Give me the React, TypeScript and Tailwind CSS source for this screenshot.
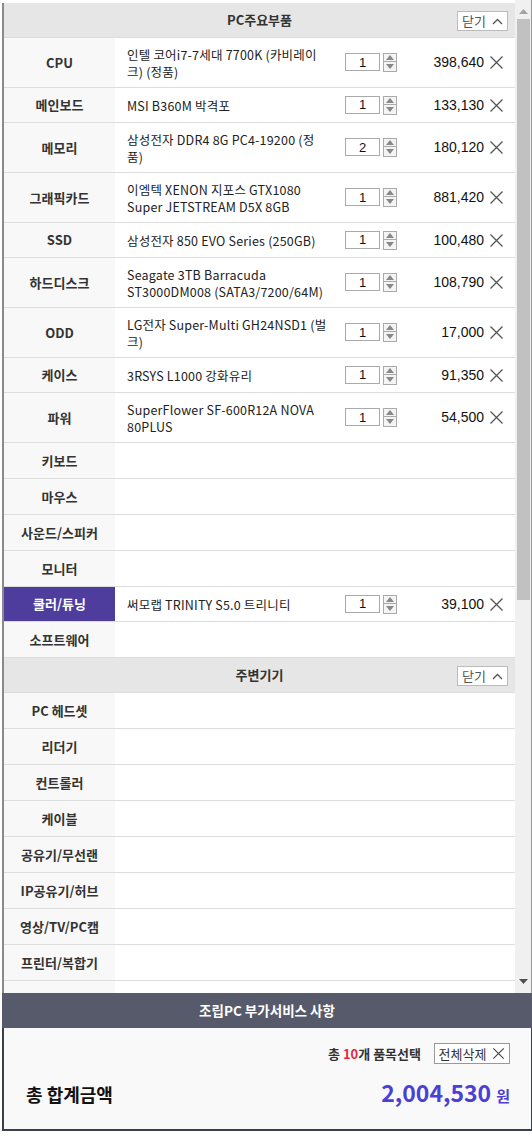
import React from "react";

type Row = { label: string; name?: string[]; qty?: number; price?: string; active?: boolean };

const main: Row[] = [
  { label: "CPU", name: ["인텔 코어i7-7세대 7700K (카비레이", "크) (정품)"], qty: 1, price: "398,640" },
  { label: "메인보드", name: ["MSI B360M 박격포"], qty: 1, price: "133,130" },
  { label: "메모리", name: ["삼성전자 DDR4 8G PC4-19200 (정", "품)"], qty: 2, price: "180,120" },
  { label: "그래픽카드", name: ["이엠텍 XENON 지포스 GTX1080", "Super JETSTREAM D5X 8GB"], qty: 1, price: "881,420" },
  { label: "SSD", name: ["삼성전자 850 EVO Series (250GB)"], qty: 1, price: "100,480" },
  { label: "하드디스크", name: ["Seagate 3TB Barracuda", "ST3000DM008 (SATA3/7200/64M)"], qty: 1, price: "108,790" },
  { label: "ODD", name: ["LG전자 Super-Multi GH24NSD1 (벌", "크)"], qty: 1, price: "17,000" },
  { label: "케이스", name: ["3RSYS L1000 강화유리"], qty: 1, price: "91,350" },
  { label: "파워", name: ["SuperFlower SF-600R12A NOVA", "80PLUS"], qty: 1, price: "54,500" },
  { label: "키보드" },
  { label: "마우스" },
  { label: "사운드/스피커" },
  { label: "모니터" },
  { label: "쿨러/튜닝", name: ["써모랩 TRINITY S5.0 트리니티"], qty: 1, price: "39,100", active: true },
  { label: "소프트웨어" },
];

const periph: Row[] = [
  { label: "PC 헤드셋" },
  { label: "리더기" },
  { label: "컨트롤러" },
  { label: "케이블" },
  { label: "공유기/무선랜" },
  { label: "IP공유기/허브" },
  { label: "영상/TV/PC캠" },
  { label: "프린터/복합기" },
  { label: "" },
];

const numFont = { fontFamily: '"Liberation Sans", "Noto Sans CJK KR", sans-serif' };

const XIcon = ({ size = 15, color = "#555" }: { size?: number; color?: string }) => (
  <svg width={size} height={size} viewBox="0 0 15 15" fill="none">
    <path d="M1.5 1.5 L13.5 13.5 M13.5 1.5 L1.5 13.5" stroke={color} strokeWidth="1.3" />
  </svg>
);

const Stepper = ({ qty }: { qty: number }) => (
  <div className="flex items-start gap-[3px]">
    <div
      className="w-[35px] h-[18px] border border-[#aaaaaa] bg-white flex items-center justify-center text-[13px] text-[#111] leading-none"
      style={numFont}
    >
      {qty}
    </div>
    <div className="w-[14px] h-[19px] flex flex-col">
      <div className="h-[9px] border border-[#aaaaaa] bg-[#f4f4f4] flex items-center justify-center">
        <svg width="8" height="5" viewBox="0 0 8 5"><path d="M0 5 L4 0 L8 5 Z" fill="#888" /></svg>
      </div>
      <div className="h-[10px] border border-t-0 border-[#aaaaaa] bg-[#f4f4f4] flex items-center justify-center">
        <svg width="8" height="5" viewBox="0 0 8 5"><path d="M0 0 L4 5 L8 0 Z" fill="#888" /></svg>
      </div>
    </div>
  </div>
);

const RowItem = ({ r }: { r: Row }) => {
  const h = r.name ? (r.name.length > 1 ? "h-[50px]" : "h-[35px]") : "h-[36px]";
  return (
    <div className={`flex ${h} border-b border-[#dddddd]`}>
      <div
        className={`w-[111px] shrink-0 flex items-center justify-center text-[13px] font-bold ${
          r.active ? "bg-[#4e3d9c] text-white" : "bg-[#f8f8f8] text-[#333]"
        }`}
      >
        {r.label}
      </div>
      {r.name ? (
        <div className="flex-1 flex items-center">
          <div className="w-[230px] shrink-0 pl-3 pr-2 text-[12.5px] leading-[17px] tracking-[0.2px] text-[#222] flex flex-col">
            {r.name.map((l, i) => (
              <span key={i} className="whitespace-nowrap">
                {l}
              </span>
            ))}
          </div>
          <div className="w-[52px] shrink-0">
            <Stepper qty={r.qty!} />
          </div>
          <div className="flex-1 text-right text-[14px] text-[#111]" style={numFont}>
            {r.price}
          </div>
          <div className="w-[31px] pl-[5px] pr-[11px] shrink-0 flex items-center">
            <XIcon />
          </div>
        </div>
      ) : (
        <div className="flex-1 bg-white" />
      )}
    </div>
  );
};

const SectionHead = ({ title }: { title: string }) => (
  <div className="h-[35px] bg-[#e6e6e6] border-b border-[#dddddd] flex items-center relative">
    <div className="flex-1 text-center text-[13px] font-bold text-[#333]">{title}</div>
    <div className="absolute right-[7px] top-[8px] w-[51px] h-[20px] bg-white border border-[#bbbbbb] flex items-center justify-center gap-[6px] text-[13px] text-[#555]">
      <span>닫기</span>
      <svg width="11" height="7" viewBox="0 0 11 7" fill="none">
        <path d="M1 6 L5.5 1.5 L10 6" stroke="#555" strokeWidth="1.3" />
      </svg>
    </div>
  </div>
);

export default function App() {
  return (
    <div
      className="w-[532px] h-[1140px] bg-white overflow-hidden"
      style={{ fontFamily: '"Noto Sans CJK KR", "Noto Sans", sans-serif' }}
    >
      <div className="h-[993px] flex pl-[2px] pt-[3px]">
        <div className="w-[513px] border-l-2 border-[#8a8a8a] overflow-hidden bg-white">
          <SectionHead title="PC주요부품" />
          {main.map((r) => (
            <RowItem key={r.label} r={r} />
          ))}
          <SectionHead title="주변기기" />
          {periph.map((r, i) => (
            <RowItem key={i} r={r} />
          ))}
        </div>
        <div className="w-[17px] -mt-[3px] bg-[#f0f0f0] flex flex-col items-center border-r border-[#999]">
          <div className="h-[19px] flex items-center justify-center pt-[3px]">
            <svg width="9" height="5" viewBox="0 0 9 5"><path d="M0 5 L4.5 0 L9 5 Z" fill="#a3a3a3" /></svg>
          </div>
          <div className="w-[13px] h-[581px] bg-[#c1c1c1]" />
          <div className="flex-1" />
          <div className="h-[20px] flex items-center justify-center pb-[4px]">
            <svg width="9" height="5" viewBox="0 0 9 5"><path d="M0 0 L4.5 5 L9 0 Z" fill="#505050" /></svg>
          </div>
        </div>
      </div>
      <div className="ml-[2px] h-[35px] bg-[#575a6a] flex items-center justify-center text-[13.5px] font-bold text-white">
        조립PC 부가서비스 사항
      </div>
      <div className="ml-[2px] h-[103px] bg-[#f9f9f9] border-l-2 border-b-2 border-r border-[#3b3e4b] flex flex-col pr-[21px]">
        <div className="flex items-center justify-end mt-[15px] gap-[13px]">
          <div className="text-[13px] font-bold text-[#333]">
            총 <span className="text-[#e8283f]">10</span>개 품목선택
          </div>
          <div className="w-[76px] h-[21px] border border-[#999] bg-white flex items-center justify-center gap-[6px] text-[13px] text-[#333]">
            <span>전체삭제</span>
            <XIcon size={13} color="#444" />
          </div>
        </div>
        <div className="flex items-center justify-between mt-[17px] pl-[22px]">
          <div className="text-[18px] font-bold text-[#111]">총 합계금액</div>
          <div className="flex items-baseline gap-[5px]">
            <span className="text-[23px] font-bold text-[#4b3fd8] leading-none">2,004,530</span>
            <span className="text-[15px] text-[#4b3fd8] font-bold">원</span>
          </div>
        </div>
      </div>
    </div>
  );
}
